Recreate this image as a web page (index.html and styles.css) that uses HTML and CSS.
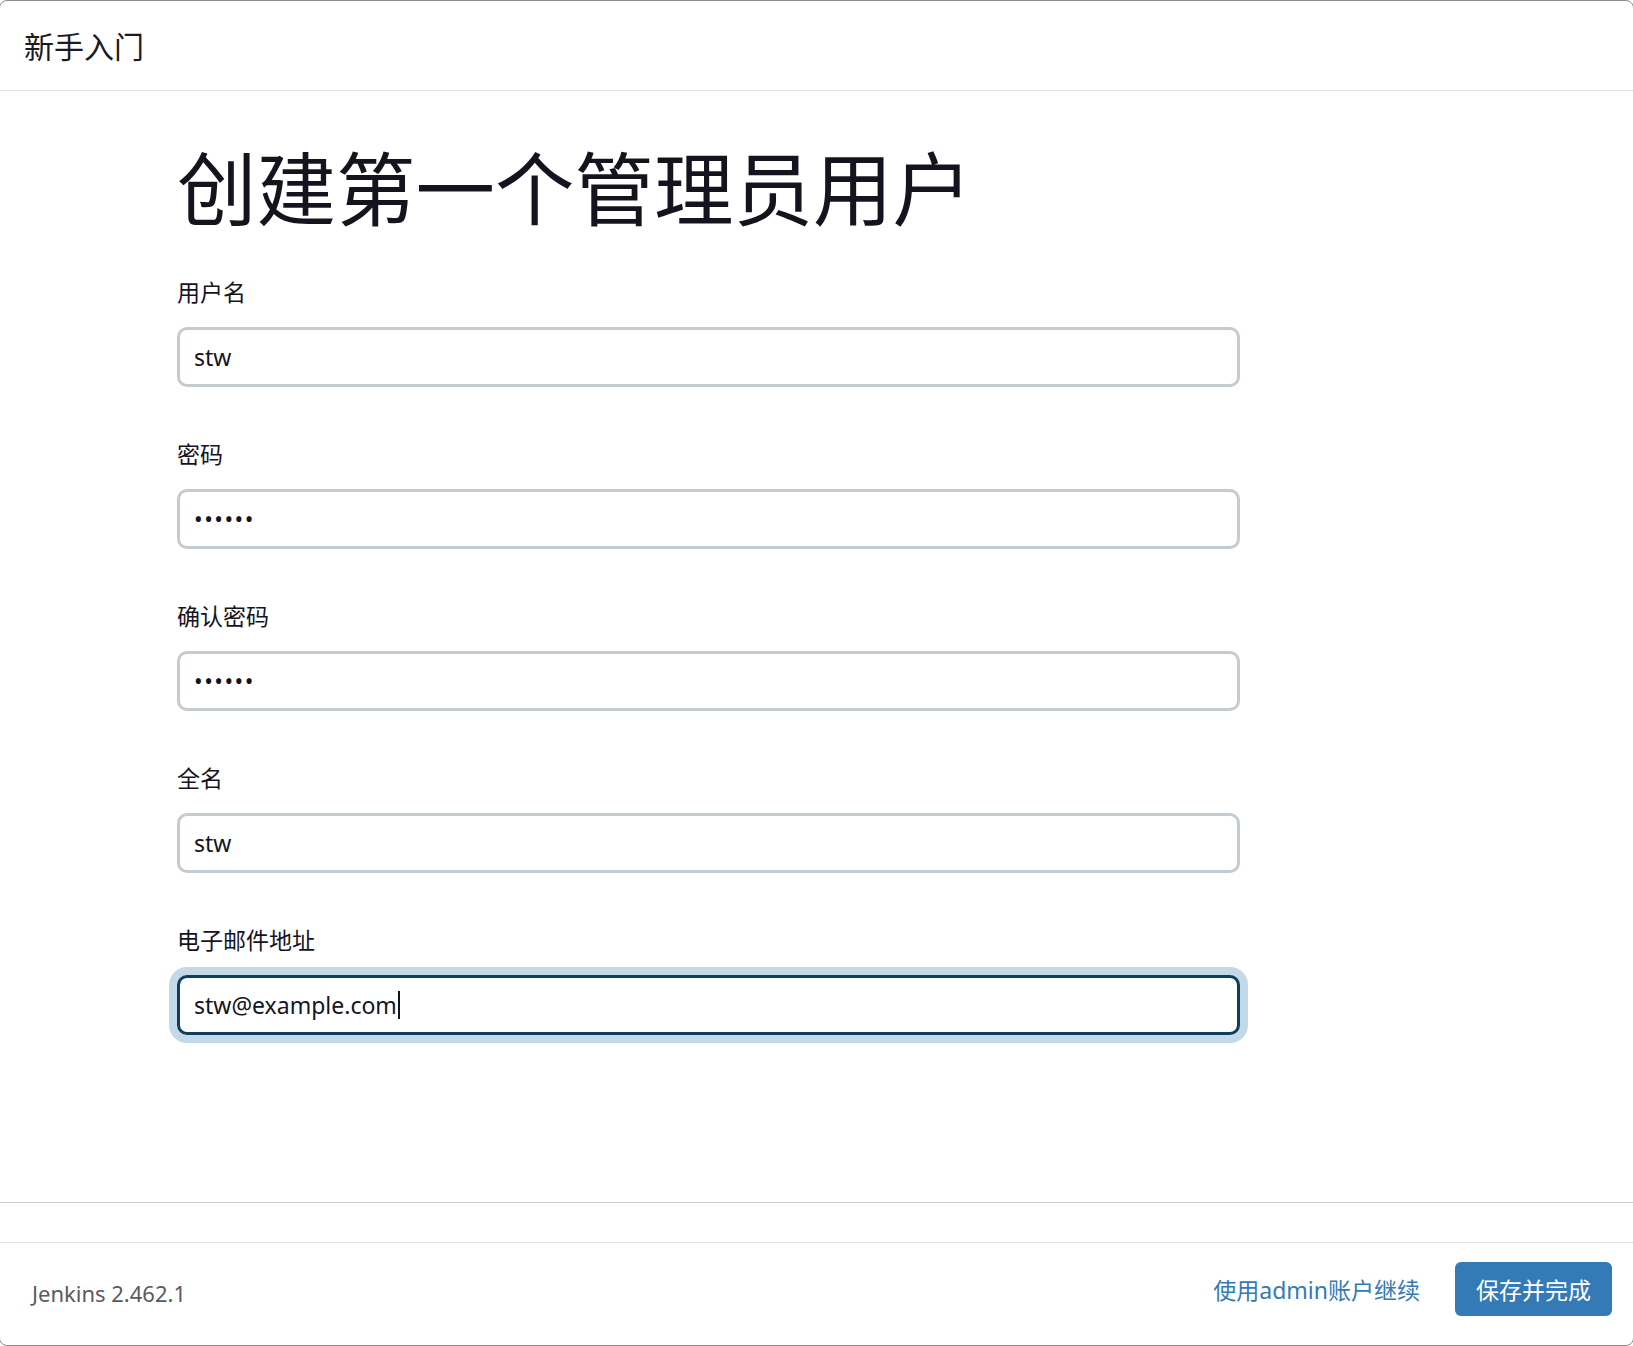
FILE: index.html
```html
<!DOCTYPE html>
<html lang="zh-CN">
<head>
<meta charset="utf-8">
<title>新手入门</title>
<link rel="stylesheet" href="styles.css">
</head>
<body>
<div class="modal">
  <div class="modal-header">新手入门</div>
  <div class="modal-body">
    <h1 class="title">创建第一个管理员用户</h1>
    <form class="form">
      <div class="field">
        <label class="label" for="username">用户名</label>
        <input class="input" id="username" type="text" value="stw">
      </div>
      <div class="field">
        <label class="label" for="password1">密码</label>
        <input class="input input-password" id="password1" type="password" value="123456">
      </div>
      <div class="field">
        <label class="label" for="password2">确认密码</label>
        <input class="input input-password" id="password2" type="password" value="123456">
      </div>
      <div class="field">
        <label class="label" for="fullname">全名</label>
        <input class="input" id="fullname" type="text" value="stw">
      </div>
      <div class="field">
        <label class="label" for="email">电子邮件地址</label>
        <div class="input input-focused" id="email">stw@example.com<span class="caret"></span></div>
      </div>
    </form>
  </div>
  <div class="spacer"></div>
  <div class="modal-footer">
    <div class="version">Jenkins 2.462.1</div>
    <div class="actions">
      <a class="link" href="#">使用admin账户继续</a>
      <button class="btn-primary" type="button">保存并完成</button>
    </div>
  </div>
</div>
</body>
</html>
```

FILE: styles.css
```css
* { box-sizing: border-box; }

html, body {
  margin: 0;
  padding: 0;
  background: #ffffff;
  overflow: hidden;
}

body {
  font-family: "Noto Sans", "Noto Sans CJK SC", sans-serif;
  color: #14141f;
}

.modal {
  width: calc(100% + 2px);
  margin-left: -1px;
  height: 1346px;
  border: 1px solid #8c8c8c;
  border-radius: 8px;
  display: flex;
  flex-direction: column;
  overflow: hidden;
}

.modal-header {
  height: 90px;
  flex: none;
  border-bottom: 1px solid #e3e3e3;
  padding-left: 24px;
  display: flex;
  align-items: center;
  font-size: 30px;
  color: #1a1a22;
  padding-bottom: 2px;
}

.modal-body {
  flex: 1;
  padding-left: 177px;
  border-bottom: 1px solid #cccccc;
}

.title {
  margin: 53px 0 0 0;
  font-size: 79.5px;
  line-height: 88px;
  font-weight: 400;
  color: #14141f;
}

.form {
  margin-top: 44px;
  display: flex;
  flex-direction: column;
  gap: 51px;
}

.field {
  display: flex;
  flex-direction: column;
  gap: 18px;
}

.label {
  font-size: 23px;
  line-height: 33px;
  color: #14141f;
}

.input {
  width: 1063px;
  height: 60px;
  border: 3px solid #c4ccd2;
  border-radius: 10px;
  padding: 0 14px;
  font-family: "Noto Sans", "Noto Sans CJK SC", sans-serif;
  font-size: 23px;
  color: #14141f;
  background: #ffffff;
  outline: none;
  display: flex;
  align-items: center;
}

.input-password {
  letter-spacing: 1.5px;
}

.input-focused {
  border-color: #0d3d5f;
  box-shadow: 0 0 0 8px #c3d9e7;
}

.caret {
  display: inline-block;
  width: 2px;
  height: 28px;
  background: #14141f;
  margin-left: 1px;
}

.spacer {
  height: 40px;
  flex: none;
  border-bottom: 1px solid #e3e3e3;
}

.modal-footer {
  height: 102px;
  flex: none;
  display: flex;
  align-items: center;
  justify-content: space-between;
  padding: 0 21px 10px 32px;
}

.version {
  font-size: 22px;
  color: #5a5a60;
  margin-top: 8px;
}

.actions {
  display: flex;
  align-items: center;
  gap: 35px;
}

.link {
  font-size: 23px;
  color: #337ab7;
  text-decoration: none;
}

.btn-primary {
  width: 157px;
  height: 54px;
  border: none;
  border-radius: 6px;
  background: #347ab6;
  color: #ffffff;
  font-family: "Noto Sans", "Noto Sans CJK SC", sans-serif;
  font-size: 23px;
  padding: 0;
}
```
